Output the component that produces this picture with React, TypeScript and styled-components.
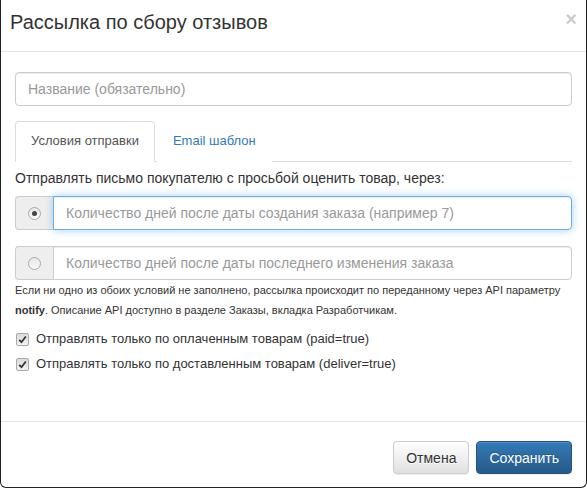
import styled, { createGlobalStyle } from 'styled-components';

const GlobalStyle = createGlobalStyle`
  html, body {
    margin: 0;
    padding: 0;
    background: #fff;
  }
  body {
    font-family: "Liberation Sans", Arial, sans-serif;
    font-size: 14px;
    line-height: 20px;
    color: #333;
  }
  * {
    box-sizing: border-box;
  }
`;

const Radio = ({ checked }: { checked?: boolean }) => (
  <SRadio>{checked && <SRadioDot />}</SRadio>
);

const Check = () => (
  <SCheck>
    <svg width="9" height="9" viewBox="0 0 9 9">
      <path d="M1.2 4.8 L3.5 7.2 L7.8 1.5" fill="none" stroke="#333" strokeWidth="1.8" />
    </svg>
  </SCheck>
);

const App = () => {
  return (
    <>
      <GlobalStyle />
      <SModal>
        <SHeader>
          <STitle>Рассылка по сбору отзывов</STitle>
          <SClose>×</SClose>
        </SHeader>
        <SBody>
          <SInput placeholder="Название (обязательно)" />
          <STabs>
            <STab $active>Условия отправки</STab>
            <STab>Email шаблон</STab>
          </STabs>
          <SLead>Отправлять письмо покупателю с просьбой оценить товар, через:</SLead>
          <SInputGroup $top={8}>
            <SAddon>
              <Radio checked />
            </SAddon>
            <SGroupInput $focus placeholder="Количество дней после даты создания заказа (например 7)" />
          </SInputGroup>
          <SInputGroup $top={16}>
            <SAddon>
              <Radio />
            </SAddon>
            <SGroupInput placeholder="Количество дней после даты последнего изменения заказа" />
          </SInputGroup>
          <SHelp>
            Если ни одно из обоих условий не заполнено, рассылка происходит по переданному через API параметру{' '}
            <b>notify</b>. Описание API доступно в разделе Заказы, вкладка Разработчикам.
          </SHelp>
          <SChecks>
            <SCheckRow>
              <Check />
              Отправлять только по оплаченным товарам (paid=true)
            </SCheckRow>
            <SCheckRow>
              <Check />
              Отправлять только по доставленным товарам (deliver=true)
            </SCheckRow>
          </SChecks>
        </SBody>
        <SFooter>
          <SButton>Отмена</SButton>
          <SButton $primary>Сохранить</SButton>
        </SFooter>
      </SModal>
    </>
  );
};

export default App;

const SModal = styled.div`
  width: 587px;
  height: 488px;
  display: flex;
  flex-direction: column;
  border: 1px solid #222;
  border-top: none;
  border-radius: 0 0 6px 6px;
  background: #fff;
  overflow: hidden;
`;

const SHeader = styled.header`
  position: relative;
  padding: 9px 15px 16px 9px;
  border-bottom: 1px solid #e5e5e5;
`;

const STitle = styled.h4`
  margin: 0;
  font-size: 20px;
  font-weight: normal;
  line-height: 26px;
  color: #333;
`;

const SClose = styled.span`
  position: absolute;
  right: 9px;
  top: 6px;
  font-size: 20px;
  font-weight: bold;
  line-height: 26px;
  color: #000;
  opacity: 0.2;
  text-shadow: 0 1px 0 #fff;
`;

const SBody = styled.div`
  flex: 1;
  padding: 20px 14px 0 14px;
`;

const SInput = styled.input`
  display: block;
  width: 100%;
  height: 34px;
  padding: 6px 12px;
  font-family: inherit;
  font-size: 14px;
  color: #555;
  border: 1px solid #ccc;
  border-radius: 4px;
  box-shadow: inset 0 1px 1px rgba(0, 0, 0, 0.075);
  outline: none;
  &::placeholder {
    color: #999;
  }
`;

const STabs = styled.ul`
  display: flex;
  margin: 15px 0 0;
  padding: 0;
  list-style: none;
  font-size: 13px;
  border-bottom: 1px solid #ddd;
`;

const STab = styled.li<{ $active?: boolean }>`
  margin-right: 2px;
  margin-bottom: -1px;
  padding: 9px 15px 10px;
  line-height: 20px;
  color: ${({ $active }) => ($active ? '#555' : '#337ab7')};
  background: #fff;
  border: 1px solid ${({ $active }) => ($active ? '#ddd' : 'transparent')};
  border-bottom-color: ${({ $active }) => ($active ? '#fff' : 'transparent')};
  border-radius: 4px 4px 0 0;
`;

const SLead = styled.p`
  margin: 6px 0 0;
  line-height: 20px;
  color: #333;
`;

const SInputGroup = styled.div<{ $top: number }>`
  display: flex;
  height: 34px;
  margin-top: ${({ $top }) => $top}px;
`;

const SAddon = styled.span`
  display: flex;
  align-items: center;
  justify-content: center;
  width: 38px;
  background: #eee;
  border: 1px solid #ccc;
  border-right: none;
  border-radius: 4px 0 0 4px;
`;

const SGroupInput = styled(SInput)<{ $focus?: boolean }>`
  flex: 1;
  width: auto;
  border-radius: 0 4px 4px 0;
  ${({ $focus }) =>
    $focus &&
    `
    border-color: #66afe9;
    box-shadow: inset 0 1px 1px rgba(0,0,0,.075), 0 0 8px rgba(102,175,233,.6);
  `}
`;

const SRadio = styled.span`
  display: flex;
  align-items: center;
  justify-content: center;
  width: 13px;
  height: 13px;
  border-radius: 50%;
  border: 1px solid #a9a9a9;
  background: linear-gradient(#e6e6e6, #fafafa);
`;

const SRadioDot = styled.span`
  width: 5px;
  height: 5px;
  border-radius: 50%;
  background: #444;
`;

const SHelp = styled.p`
  margin: 0;
  font-size: 11px;
  line-height: 20px;
  color: #333;

  b {
    font-weight: bold;
  }
`;

const SChecks = styled.div`
  display: flex;
  flex-direction: column;
  gap: 5px;
  margin-top: 9px;
`;

const SCheckRow = styled.label`
  display: flex;
  align-items: center;
  gap: 7px;
  padding-left: 1px;
  font-size: 13px;
  line-height: 20px;
`;

const SCheck = styled.span`
  display: flex;
  align-items: center;
  justify-content: center;
  width: 13px;
  height: 13px;
  border: 1px solid #a9a9a9;
  border-radius: 2px;
  background: linear-gradient(#dcdcdc, #f2f2f2);
`;

const SFooter = styled.footer`
  display: flex;
  justify-content: flex-end;
  gap: 7px;
  padding: 19px 14px 13px;
  border-top: 1px solid #e5e5e5;
`;

const SButton = styled.button<{ $primary?: boolean }>`
  height: 33px;
  padding: 6px 12px;
  font-family: inherit;
  font-size: 14px;
  line-height: 20px;
  border-radius: 4px;
  border: 1px solid ${({ $primary }) => ($primary ? '#245580' : '#ccc')};
  color: ${({ $primary }) => ($primary ? '#fff' : '#333')};
  text-shadow: ${({ $primary }) => ($primary ? '0 -1px 0 rgba(0,0,0,.2)' : '0 1px 0 #fff')};
  background: ${({ $primary }) =>
    $primary ? 'linear-gradient(to bottom, #337ab7 0, #265a88 100%)' : 'linear-gradient(to bottom, #fff 0, #e0e0e0 100%)'};
  box-shadow: inset 0 1px 0 rgba(255, 255, 255, 0.15), 0 1px 1px rgba(0, 0, 0, 0.075);
`;
